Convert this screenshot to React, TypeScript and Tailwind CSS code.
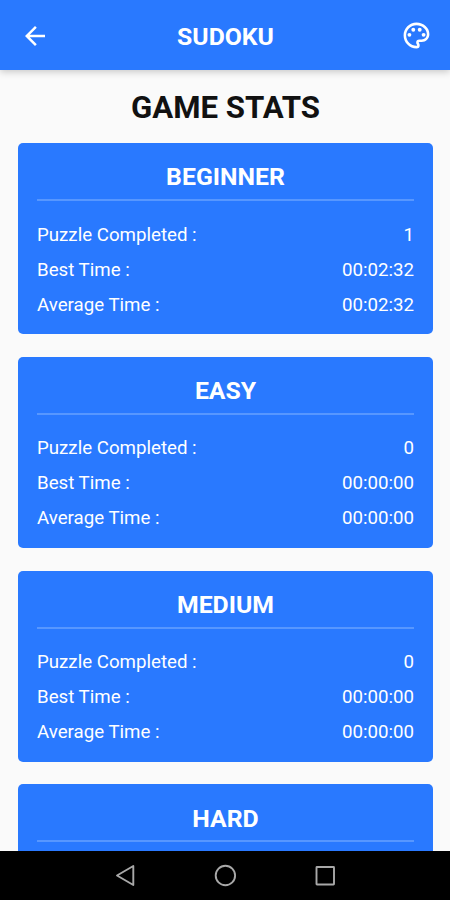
import React from 'react';
import { MdArrowBack, MdOutlinePalette } from 'react-icons/md';

type Stats = { completed: string; best: string; average: string };
type Level = { name: string; stats?: Stats };

const levels: Level[] = [
  { name: 'BEGINNER', stats: { completed: '1', best: '00:02:32', average: '00:02:32' } },
  { name: 'EASY', stats: { completed: '0', best: '00:00:00', average: '00:00:00' } },
  { name: 'MEDIUM', stats: { completed: '0', best: '00:00:00', average: '00:00:00' } },
  { name: 'HARD' },
];

function StatRow({ label, value }: { label: string; value: string }) {
  return (
    <div className="flex h-[35px] items-center justify-between text-[18.7px]">
      <span>{label}</span>
      <span>{value}</span>
    </div>
  );
}

function StatCard({ level }: { level: Level }) {
  return (
    <section className="h-[191px] shrink-0 rounded-[5px] bg-[#2979ff] px-[19px] text-white">
      <h2 className="flex h-[58px] items-center justify-center border-b-2 border-[#5797ff] pt-[12px] text-[24.800px] font-bold">
        {level.name}
      </h2>
      {level.stats && (
        <div className="pt-[16.100px]">
          <StatRow label="Puzzle Completed :" value={level.stats.completed} />
          <StatRow label="Best Time :" value={level.stats.best} />
          <StatRow label="Average Time :" value={level.stats.average} />
        </div>
      )}
    </section>
  );
}

export default function App() {
  return (
    <div className="flex h-[900px] w-[450px] flex-col overflow-hidden bg-[#fafafa] font-['Roboto',sans-serif]">
      <header className="z-10 flex h-[70px] shrink-0 items-center justify-between bg-[#2979ff] pr-[18px] pl-[20px] pt-[1px] text-white shadow-[0_2px_7px_rgba(0,0,0,0.2)]">
        <MdArrowBack size={30} />
        <h1 className="pt-[3px] text-[24.800px] font-bold">SUDOKU</h1>
        <MdOutlinePalette size={31} />
      </header>
      <main className="flex min-h-0 flex-1 flex-col overflow-hidden pr-[17px] pl-[18px]">
        <h2 className="flex h-[73px] shrink-0 items-center justify-center pt-[3px] text-[31.200px] font-bold text-[#111]">GAME STATS</h2>
        <div className="flex flex-col gap-[22.800px]">
          {levels.map((level) => (
            <StatCard key={level.name} level={level} />
          ))}
        </div>
      </main>
      <nav className="flex h-[49px] shrink-0 items-center justify-center bg-black">
        <svg className="h-[49px] w-[300px]" viewBox="0 0 300 49" fill="none" stroke="#a8a8a8" strokeWidth="1.9">
          <path d="M58.300 15v19L42 24.500z" strokeLinejoin="round" />
          <circle cx="150.400" cy="24.500" r="9.700" />
          <rect x="241.500" y="16" width="17.500" height="17.500" rx="0.500" />
        </svg>
      </nav>
    </div>
  );
}
